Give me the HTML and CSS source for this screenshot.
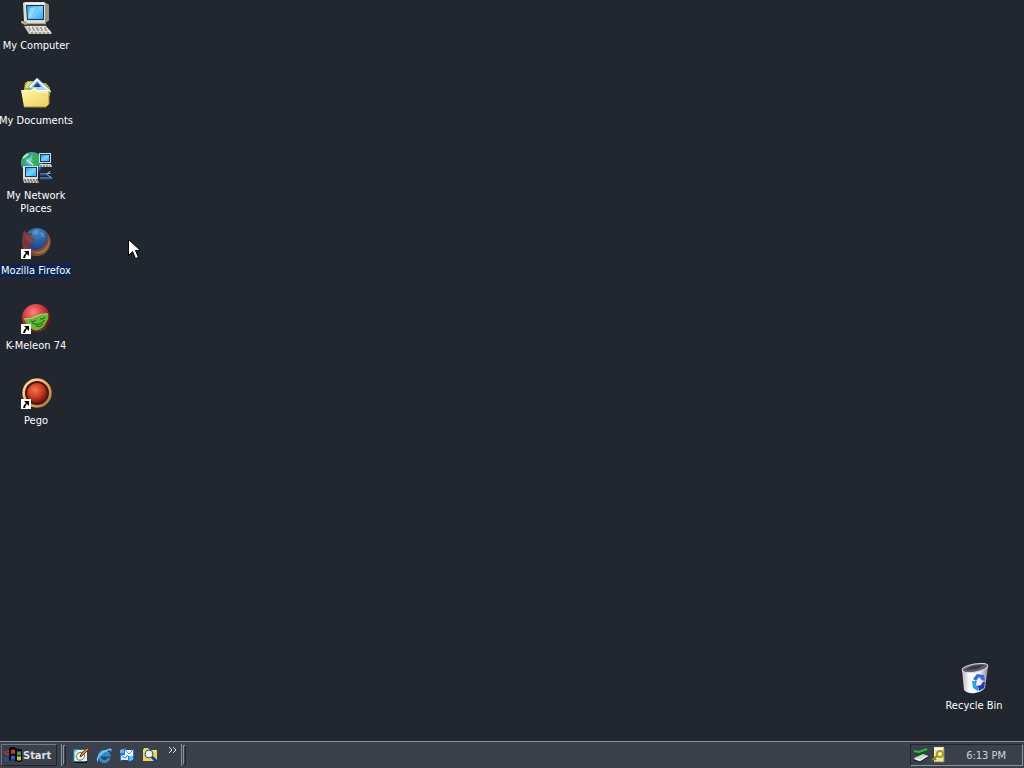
FILE: index.html
```html
<!DOCTYPE html>
<html lang="en">
<head>
    <meta charset="UTF-8">
    <title>Desktop</title>
    <link rel="stylesheet" href="styles.css">
</head>
<body>
    <svg width="0" height="0" class="defs" aria-hidden="true">
        <defs>
            <linearGradient id="screen" x1="0" y1="0" x2="1" y2="1">
                <stop offset="0" stop-color="#2a9df0"/><stop offset=".5" stop-color="#78d2ff"/><stop offset="1" stop-color="#39a6ee"/>
            </linearGradient>
            <linearGradient id="bin" x1="0" x2="1">
                <stop offset="0" stop-color="#b9b8c4"/><stop offset=".3" stop-color="#fff"/><stop offset=".7" stop-color="#eeedfa"/><stop offset="1" stop-color="#8583a0"/>
            </linearGradient>
            <linearGradient id="folder" x1="0" y1="0" x2="1" y2="1">
                <stop offset="0" stop-color="#fff9a8"/><stop offset="1" stop-color="#e9cf61"/>
            </linearGradient>
            <radialGradient id="globe" cx=".4" cy=".3" r=".7">
                <stop offset="0" stop-color="#7ccdf6"/><stop offset="1" stop-color="#1a4f9e"/>
            </radialGradient>
            <radialGradient id="foxGlobe" cx=".5" cy=".2" r=".8">
                <stop offset="0" stop-color="#3f86c4"/><stop offset="1" stop-color="#102d78"/>
            </radialGradient>
            <linearGradient id="fox" x1="0" y1="0" x2="1" y2="1">
                <stop offset="0" stop-color="#6a3540"/><stop offset=".6" stop-color="#793c38"/><stop offset="1" stop-color="#94683f"/>
            </linearGradient>
            <radialGradient id="redBall" cx=".4" cy=".3" r=".7">
                <stop offset="0" stop-color="#f58a83"/><stop offset=".5" stop-color="#d5393b"/><stop offset="1" stop-color="#68141b"/>
            </radialGradient>
            <radialGradient id="pegoBall" cx=".4" cy=".35" r=".65">
                <stop offset="0" stop-color="#f47850"/><stop offset=".6" stop-color="#c73821"/><stop offset="1" stop-color="#741b13"/>
            </radialGradient>
            <linearGradient id="pegoRing" x1="0" y1="0" x2="1" y2="1">
                <stop offset="0" stop-color="#fae6ab"/><stop offset=".5" stop-color="#e3b86c"/><stop offset="1" stop-color="#a8763a"/>
            </linearGradient>
            <g id="shortcut">
                <rect x="1" y="22" width="10" height="10" fill="#fff"/>
                <path d="M4 24h5v5l-2-2-1 1-1 3H3l1-3 2-2z" fill="#000"/>
            </g>
        </defs>
    </svg>

    <main class="desktop">
        <div class="icons">
            <button class="icon">
                <svg viewBox="0 0 32 32" aria-hidden="true">
                    <path d="M3 1L5 0h19l5 3v15l-4 3H7l-3-2z" fill="#dedccb"/>
                    <path d="M25 1l4 2v15l-4 3z" fill="#9b9786"/>
                    <path d="M5 1h19v1H5z" fill="#fff"/>
                    <path d="M6 3h18v15H7z" fill="#0b3564"/>
                    <path d="M7 4h16v13H8z" fill="url(#screen)"/>
                    <path d="M10 6l6-1-5 10H9z" fill="#baebff" opacity=".6"/>
                    <path d="M1 19h4l2 2h19v2H5l-4-2z" fill="#aaa895"/>
                    <path d="M6 22h20v2H7z" fill="#4a4942"/>
                    <path d="M4 24h22l6 7-1 1H9z" fill="#cfcdbf"/>
                    <path d="M7 25h19M8 27h20M10 29h20" stroke="#fff" stroke-dasharray="2 1"/>
                    <path d="M8 26h19M9 28h20M11 31h20" stroke="#6b685e" stroke-dasharray="2 2"/>
                </svg>
                <span>My Computer</span>
            </button>
            <button class="icon">
                <svg viewBox="0 0 32 32" aria-hidden="true">
                    <path d="M4 12l1-6 3-2h6l2 2h10l4 5v8H4z" fill="#a8b63c"/>
                    <path d="M7 5h6l-3 6H5z" fill="#dcdc68"/>
                    <path d="M17 1l14 13-4 6L8 10z" fill="#f5f8ff" stroke="#8fa9c4"/>
                    <path d="M17 4l8 8H10z" fill="#609cdb"/>
                    <path d="M15 8l3-2 3 5h-7z" fill="#203f83"/>
                    <path d="M12 10h12l3 3H11z" fill="#a6d8f4"/>
                    <path d="M1 13h10l3-2h2l1 3h12v13l-3 3H4z" fill="url(#folder)"/>
                    <path d="M2 14h9l4-2 2 3h11" stroke="#fffbd8" fill="none"/>
                    <path d="M4 30h22l3-3V14" stroke="#b18c30" fill="none"/>
                </svg>
                <span>My Documents</span>
            </button>
            <button class="icon">
                <svg viewBox="0 0 32 32" aria-hidden="true">
                    <circle cx="12" cy="11" r="11" fill="url(#globe)"/>
                    <path d="M2 7Q5 1 12 1l-2 5-4 1-1 5-3 2q-2-3 0-7zM13 1l6 2 3 8-7-1-3-3zM11 9l9 2-2 4H9z" fill="#35ae55"/>
                    <path d="M3 6l5-4M7 8l6 5" stroke="#b8efbb" stroke-width="2"/>
                    <path d="M19 1h12v10H19z" fill="#ddd9ca"/><path d="M20 2h10v8H20z" fill="#123c6e"/><path d="M21 3h8v6h-8z" fill="url(#screen)"/>
                    <path d="M20 12h11l1 3H19z" fill="#d5d4ce"/><path d="M20 14h10" stroke="#464747" stroke-dasharray="2 1"/>
                    <path d="M3 14h15v13H3z" fill="#e1ddcf"/><path d="M5 15h12v10H5z" fill="#0d3c70"/><path d="M6 16h10v8H6z" fill="url(#screen)"/>
                    <path d="M3 27h14l2 4H4z" fill="#d0cdbf"/><path d="M4 28h13M5 30h13" stroke="#49453f" stroke-dasharray="2 1"/>
                    <path d="M20 22h7l3-3M20 26h12l-6-4 5-1" stroke="#7bb7f1" fill="none"/>
                    <path d="M20 23h7M21 27h11" stroke="#244d9a"/>
                </svg>
                <span>My Network<br>Places</span>
            </button>
            <button class="icon selected">
                <svg viewBox="0 0 32 32" aria-hidden="true">
                    <circle cx="17" cy="14" r="13" fill="url(#foxGlobe)"/>
                    <path d="M13 4l5-2 1 4-3 2-4-1zM20 5l4 1 1 5-4-2z" fill="#75a7c8" opacity=".5"/>
                    <path d="M4 3l3 3 5 1-1 3 4 3-5 2-1 4c3 5 10 5 14 0 4-4 5-8 3-14 5 4 6 10 3 16-3 6-7 8-13 8C8 29 2 24 2 16c0-4 0-8 2-13z" fill="url(#fox)"/>
                    <path d="M28 8c3 6 2 10-1 14-5 6-12 5-16 2 7 2 12 0 15-4 3-4 3-7 2-12z" fill="#a78448" opacity=".7"/>
                    <path d="M4 5l3 4 5-1-2 3 5 3-5 2-5-5z" fill="#8a4342"/>
                    <use href="#shortcut"/>
                </svg>
                <span>Mozilla Firefox</span>
            </button>
            <button class="icon">
                <svg viewBox="0 0 32 32" aria-hidden="true">
                    <circle cx="16" cy="16" r="14" fill="url(#redBall)"/>
                    <path d="M4 17q8 0 13-3 5-3 11-2 2 8-2 13-4 5-9 4Q8 27 4 17z" fill="#68b638"/>
                    <path d="M4 17q8 0 13-3 5-3 11-2" stroke="#b5e06b" fill="none"/>
                    <path d="M11 19q3 2 5-1M20 17q3 1 5-2M12 21q7 4 13-3M16 24q4 2 7-2" stroke="#1c5624" fill="none"/>
                    <path d="M29 12q2 8-3 13-5 5-11 4 9-2 11-8 3-4 3-9z" fill="#74151b"/>
                    <use href="#shortcut"/>
                </svg>
                <span>K-Meleon 74</span>
            </button>
            <button class="icon">
                <svg viewBox="0 0 32 32" aria-hidden="true">
                    <circle cx="17" cy="16" r="15" fill="#75451e"/>
                    <circle cx="17" cy="16" r="13" fill="none" stroke="url(#pegoRing)" stroke-width="3"/>
                    <circle cx="17" cy="16" r="12" fill="#4f170e"/>
                    <circle cx="17" cy="16" r="10" fill="url(#pegoBall)"/>
                    <use href="#shortcut"/>
                </svg>
                <span>Pego</span>
            </button>
        </div>

        <button class="icon recycle">
            <svg viewBox="0 0 32 32" aria-hidden="true">
                <path d="M4 8l2 20q4 4 11 3 7-1 10-5l3-21z" fill="url(#bin)"/>
                <ellipse cx="17" cy="6" rx="13" ry="4" fill="#625d68" stroke="#d9d7e5" transform="rotate(-10 17 6)"/>
                <path d="M7 8l8-4 11-1-7 4z" fill="#37343f"/>
                <path d="M15 17l4-5 7 1 1 6-3-1-3-3-3 4z" fill="#3a6be0"/>
                <path d="M14 19h5l-1 4 4 3-2 3-5-3z" fill="#29a6d8"/>
                <path d="M27 20l-1 6-5 3v-3l-2-2 4-1 2-3z" fill="#2736b8"/>
            </svg>
            <span>Recycle Bin</span>
        </button>

        <svg class="cursor" viewBox="0 0 12 21" aria-hidden="true">
            <path d="M.5 .5v16l4-4 3 7 3-1-3-7h5z" fill="#fff" stroke="#000"/>
        </svg>
    </main>

    <footer class="taskbar">
        <button class="start">
            <svg viewBox="0 0 18 16" aria-hidden="true">
                <path d="M5 1q4-2 7 0 3 2 6 1v12q-3 2-6 0-4-2-7 0z" fill="#08090c"/>
                <path d="M7 3q2-1 4 0v4q-2-1-4 0z" fill="#c63d36"/>
                <path d="M13 4q2 1 4 0v4q-2 1-4 0z" fill="#3e9b43"/>
                <path d="M7 9q2-1 4 0v4q-2-1-4 0z" fill="#3458c2"/>
                <path d="M13 9q2 1 4 0v4q-2 1-4 0z" fill="#d5bd43"/>
                <path d="M0 5h2M3 4h2M1 7h4" stroke="#a4353b" stroke-width="2"/>
                <path d="M0 11h2M3 10h2M1 13h4" stroke="#3045a0" stroke-width="2"/>
            </svg>
            Start
        </button>
        <i class="divider"></i>
        <i class="grip"></i>
        <nav class="quick">
            <button aria-label="Show Desktop">
                <svg viewBox="0 0 16 16">
                    <path d="M1 2h13v14H1z" fill="#0c1014"/>
                    <path d="M0 2h13v13H0z" fill="#267895"/>
                    <path d="M2 3h12v11H2z" fill="#f7f3df"/>
                    <path d="M1 4l3-2v2L2 6v8H1z" fill="#77cee7"/>
                    <path d="M5 6l5-1 2 4-3 4H5L3 9z" fill="#fff" stroke="#6e6b60"/>
                    <path d="M7 10l1-3 6-6 2 1-7 7z" fill="#d99232" stroke="#563f28"/>
                </svg>
            </button>
            <button aria-label="Internet Explorer">
                <svg viewBox="0 0 16 16">
                    <path d="M13 11a5 5 0 1 1 0-3H5" fill="none" stroke="#2b8ed4" stroke-width="3"/>
                    <path d="M4 7q2-4 7-3" fill="none" stroke="#8bdcfa"/>
                    <path d="M2 15C-2 12 4 5 12 2q5-2 3 3 0-3-4-1Q4 8 2 12z" fill="#70c7f2"/>
                </svg>
            </button>
            <button aria-label="Outlook Express">
                <svg viewBox="0 0 16 16">
                    <path d="M1 3l5-2 3 3 6-2v10l-5 3-3-3-6 2z" fill="#2875c8"/>
                    <path d="M6 3h8v6H6z" fill="#eef7ff"/>
                    <path d="M6 3l4 4 4-4" fill="none" stroke="#6497d2"/>
                    <path d="M2 8h7v5H2z" fill="#d4eaff"/>
                    <path d="M2 8l4 3 3-3" fill="none" stroke="#4585cb"/>
                    <path d="M1 3l4-1v4H1zM14 13l-4 1V9h4z" fill="#65b5f2"/>
                </svg>
            </button>
            <button aria-label="Search">
                <svg viewBox="0 0 16 16">
                    <path d="M1 3l1-2h4l2 2h7v11H1z" fill="#ebd45c"/>
                    <path d="M1 4h13" stroke="#fff3a0"/>
                    <circle cx="7" cy="7" r="4" fill="#c9eff9" stroke="#34506f"/>
                    <circle cx="7" cy="7" r="2" fill="#fff"/>
                    <path d="M10 10l5 5" stroke="#1a3b99" stroke-width="3"/>
                </svg>
            </button>
            <button class="more" aria-label="More">
                <svg viewBox="0 0 9 6"><path d="M1 0l3 3-3 3M5 0l3 3-3 3" fill="none" stroke="#e3e5e8"/></svg>
            </button>
        </nav>
        <i class="divider"></i>
        <i class="grip"></i>
        <div class="tray">
            <svg viewBox="0 0 16 16" aria-hidden="true">
                <path d="M1 4l4 1 8-4 2 1v3L7 9 1 7z" fill="#0f5526"/>
                <path d="M1 4l5 1 8-3" stroke="#3fae50" fill="none" stroke-width="2"/>
                <path d="M1 11l9-4 5 2-8 6-5-2z" fill="#cfd3d2"/>
                <path d="M3 12l5 1 7-4" stroke="#fff" fill="none"/>
                <path d="M1 13l6 2 8-5" stroke="#15171a" fill="none"/>
            </svg>
            <svg viewBox="0 0 16 16" aria-hidden="true">
                <path d="M3 0h10v15H3z" fill="#e9e6b4"/>
                <path d="M4 2h8" stroke="#fff" stroke-width="2"/>
                <path d="M13 1v14H3" stroke="#898544" fill="none"/>
                <circle cx="9" cy="7" r="3" fill="#fbf6b4" stroke="#a39c1c" stroke-width="2"/>
                <path d="M6 9l-5 4M3 11l2 2" stroke="#8c861c" stroke-width="2"/>
            </svg>
            <time>6:13 PM</time>
        </div>
    </footer>
</body>
</html>
```
FILE: styles.css
```css
body {
    margin: 0;
    min-height: 100vh;
    display: flex;
    flex-direction: column;
    background: #22272f;
    color: #fff;
    font-family: Tahoma, "DejaVu Sans Condensed", "DejaVu Sans", sans-serif;
    font-size: 11px;
    line-height: 13px;
    overflow: hidden;
}

button {
    margin: 0;
    padding: 0;
    border: none;
    background: none;
    color: inherit;
    font: inherit;
}

svg {
    display: block;
    flex: none;
}

.defs {
    position: absolute;
}

.desktop {
    position: relative;
    flex: 1;
    display: flex;
    justify-content: space-between;
    padding: 0 14px 6px 0;
}

.icons {
    display: flex;
    flex-direction: column;
}

.icon {
    width: 72px;
    height: 75px;
    padding-top: 2px;
    display: flex;
    flex-direction: column;
    align-items: center;
    gap: 5px;
    white-space: nowrap;
}

.icon svg {
    width: 32px;
    height: 32px;
}

.selected span {
    padding: 0 1px;
    background: #0e2450;
}

.recycle {
    align-self: flex-end;
}

.cursor {
    position: absolute;
    left: 128px;
    top: 239px;
    width: 12px;
    height: 21px;
}

/* taskbar */
.taskbar {
    height: 26px;
    display: flex;
    align-items: center;
    border-top: 1px solid #8b929c;
    background: #3b414b;
    padding: 0 1px;
}

.start {
    width: 56px;
    height: 22px;
    display: flex;
    align-items: center;
    gap: 1px;
    padding-left: 2px;
    border: 1px solid;
    border-color: #727982 #20242a #20242a #727982;
    color: #dde0e4;
    font-weight: bold;
}

.start svg {
    width: 18px;
    height: 16px;
}

.divider {
    height: 22px;
    margin-left: 4px;
    border-left: 1px solid #8d949d;
}

.grip {
    width: 1px;
    height: 18px;
    margin-left: 1px;
    border: 1px solid;
    border-color: #8d949d #22262c #22262c #8d949d;
}

.quick {
    display: flex;
    align-items: center;
    gap: 7px;
    margin-left: 7px;
}

.quick svg,
.tray svg {
    width: 16px;
    height: 16px;
}

.quick .more {
    align-self: flex-start;
    margin-left: 3px;
}

.quick .more svg {
    width: 9px;
    height: 6px;
}

.tray {
    display: flex;
    align-items: center;
    gap: 2px;
    height: 20px;
    margin-left: auto;
    padding: 0 16px 0 2px;
    border: 1px solid;
    border-color: #22262c #8d949d #8d949d #22262c;
}

.tray time {
    margin-left: 17px;
    color: #d0d4da;
}
```
